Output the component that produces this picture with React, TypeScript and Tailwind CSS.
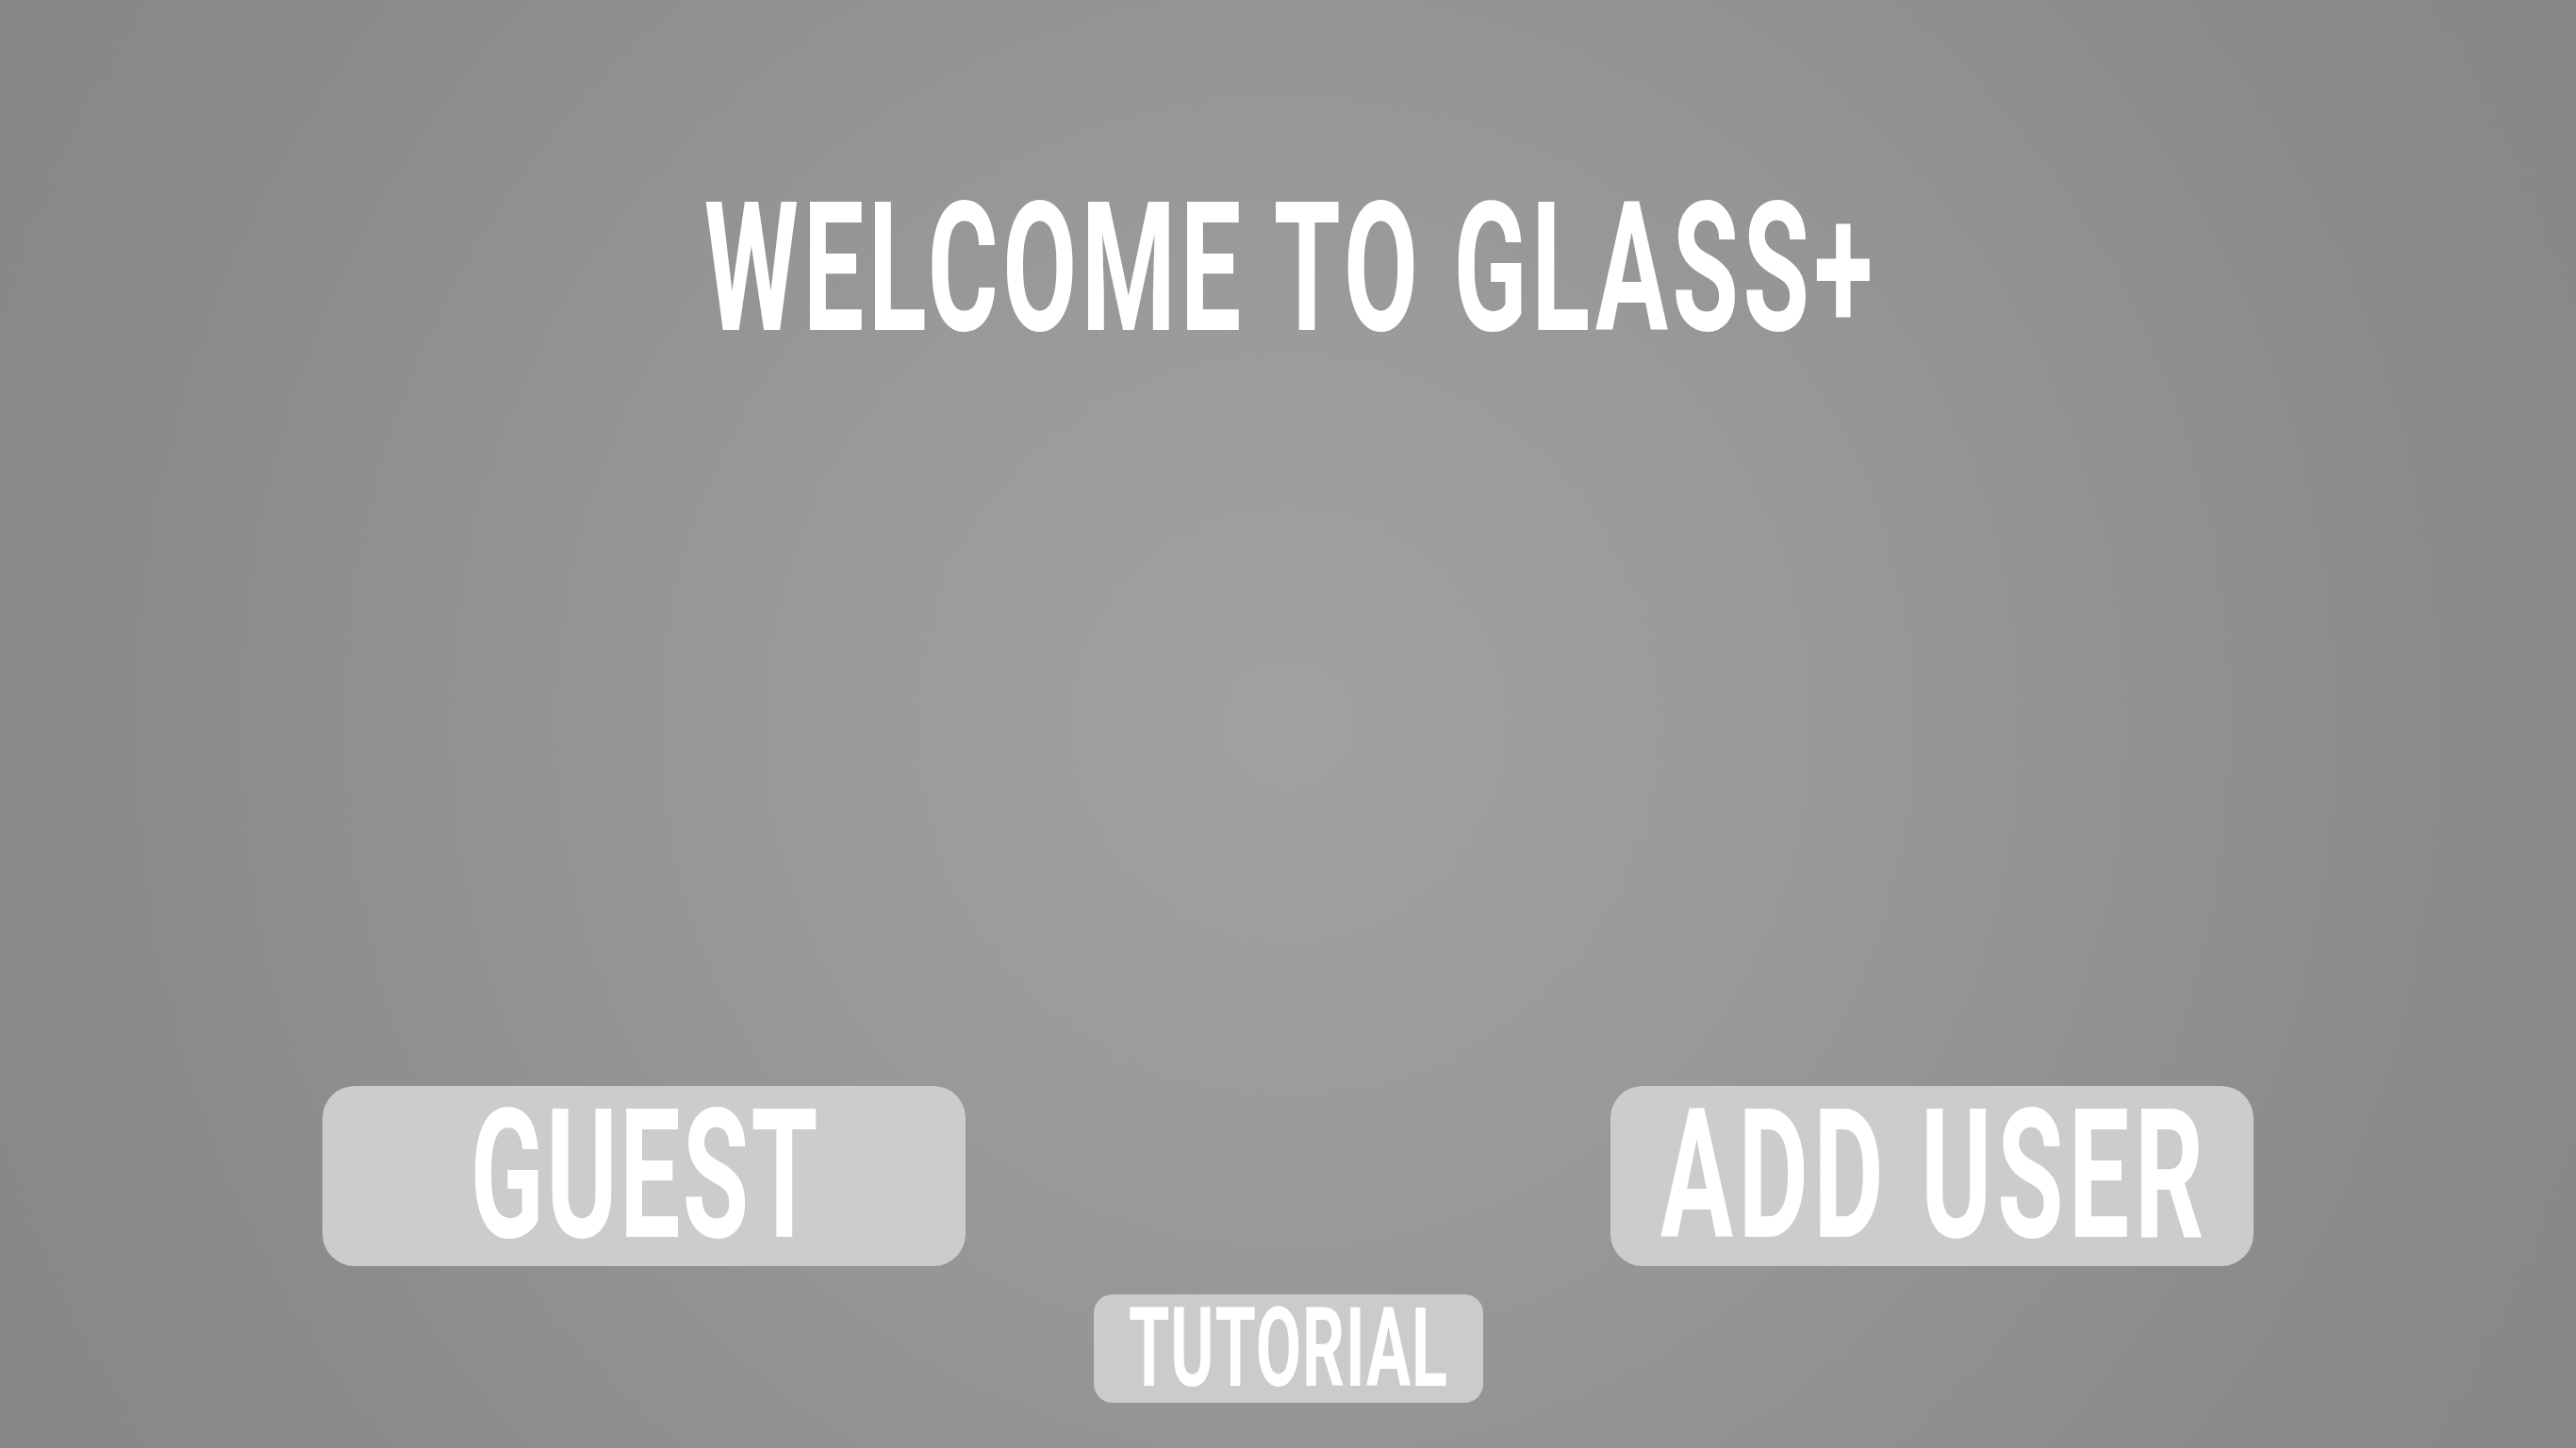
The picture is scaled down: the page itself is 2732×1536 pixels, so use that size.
const font = { fontFamily: 'Roboto, "Liberation Sans", sans-serif' };

const Label = ({ text, className }: { text: string; className: string }) => (
  <span className={`inline-block whitespace-nowrap origin-center leading-none font-bold text-white ${className}`} style={font}>
    {text}
  </span>
);

export default function App() {
  return (
    <div className="w-[2732px] h-[1536px] flex flex-col bg-[radial-gradient(circle_at_50%_50%,#a1a1a1_0%,#999999_35%,#8a8a8a_80%,#878787_100%)] overflow-hidden">
      <div className="pt-[190px] flex justify-center">
        <Label text="WELCOME TO GLASS+" className="text-[191px] scale-x-[0.6] tracking-[0.04em] pl-[0.04em]" />
      </div>

      <div className="mt-auto pb-[48px] flex flex-col items-center">
        <div className="w-full px-[342px] flex justify-between">
          <button className="w-[682px] h-[191px] rounded-[34px] bg-[#cccccc] flex items-center justify-center">
            <Label text="GUEST" className="text-[191px] scale-x-[0.6] tracking-[0.02em] pl-[0.02em]" />
          </button>
          <button className="w-[682px] h-[191px] rounded-[34px] bg-[#cccccc] flex items-center justify-center">
            <Label text="ADD USER" className="text-[191px] scale-x-[0.6] tracking-[0.047em] pl-[0.047em]" />
          </button>
        </div>
        <button className="mt-[30px] w-[413px] h-[115px] rounded-[20px] bg-[#cbcbcb] flex items-center justify-center">
          <Label text="TUTORIAL" className="text-[117px] scale-x-[0.6] tracking-[0.012em] pl-[0.012em]" />
        </button>
      </div>
    </div>
  );
}
